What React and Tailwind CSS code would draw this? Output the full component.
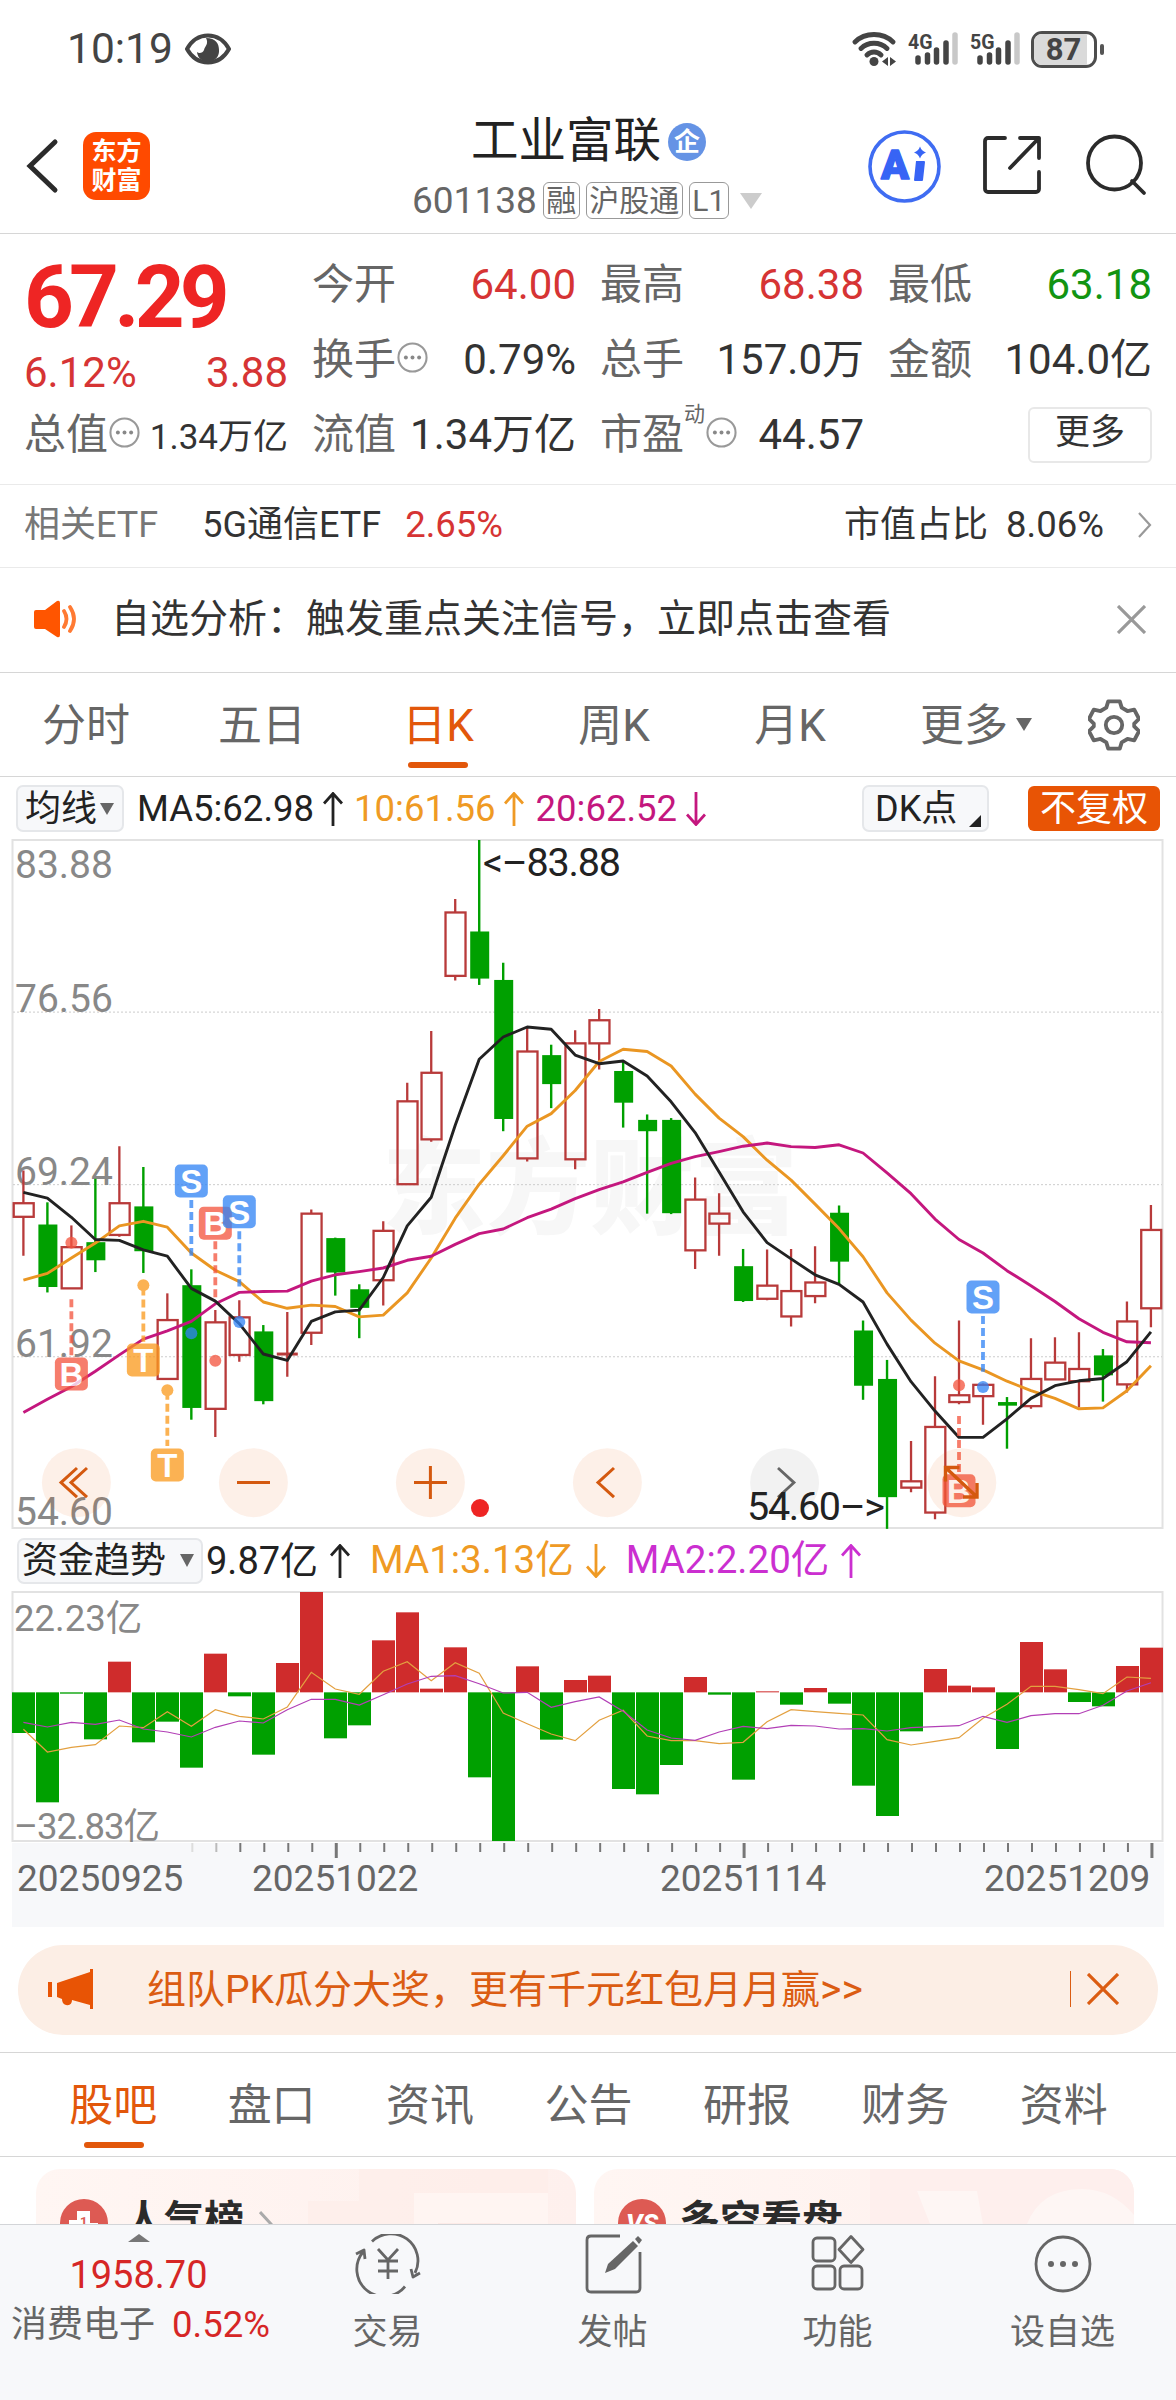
const candles = [
  ["r", 752, 824, 854, 940], ["g", 822, 871, 1009, 1021], ["r", 873, 921, 1012, 1012], ["g", 770, 910, 950, 976],
  ["r", 698, 824, 894, 898], ["g", 744, 831, 930, 978], ["r", 1023, 1082, 1212, 1212], ["g", 970, 1005, 1276, 1302],
  ["r", 1060, 1087, 1278, 1340], ["r", 1038, 1076, 1159, 1174], ["g", 1093, 1107, 1261, 1268], ["r", 1064, 1157, 1157, 1207],
  ["r", 838, 847, 1110, 1137], ["g", 900, 901, 977, 1028], ["g", 1003, 1014, 1055, 1122], ["r", 864, 885, 994, 1050],
  ["r", 558, 599, 782, 782], ["r", 444, 536, 683, 688], ["r", 152, 182, 322, 332], ["g", 22, 224, 328, 342],
  ["g", 293, 331, 638, 665], ["r", 435, 489, 725, 732], ["g", 474, 497, 561, 614], ["r", 442, 471, 727, 749],
  ["r", 395, 420, 471, 529], ["g", 510, 532, 602, 657], ["g", 628, 640, 665, 847], ["g", 636, 640, 846, 848],
  ["r", 767, 816, 928, 969], ["r", 802, 847, 869, 940], ["g", 925, 963, 1040, 1042], ["r", 926, 1006, 1035, 1038],
  ["r", 925, 1018, 1074, 1096], ["r", 919, 999, 1029, 1045], ["g", 829, 845, 953, 1003], ["g", 1083, 1105, 1227, 1258],
  ["g", 1170, 1212, 1473, 1543], ["r", 1349, 1438, 1452, 1462], ["r", 1206, 1318, 1507, 1522], ["r", 1083, 1248, 1263, 1268],
  ["r", 1222, 1225, 1250, 1313], ["g", 1252, 1263, 1271, 1366], ["r", 1122, 1212, 1272, 1278], ["r", 1120, 1176, 1213, 1213],
  ["r", 1109, 1190, 1217, 1275], ["g", 1146, 1160, 1204, 1262], ["r", 1041, 1085, 1224, 1242], ["r", 828, 883, 1056, 1098],
];

const ma5 = [
  800, 813, 855, 904, 906, 927, 941, 1012, 1040, 1090, 1157, 1171, 1085, 1064, 1060, 988, 874, 811, 652, 506, 457, 435, 440, 497,
  516, 510, 543, 600, 668, 755, 843, 911, 947, 982, 1003, 1042, 1135, 1218, 1283, 1341, 1341, 1300, 1255, 1227, 1216, 1211, 1174, 1108,
];
const ma10 = [
  994, 979, 945, 912, 874, 864, 877, 934, 972, 997, 1042, 1056, 1049, 1052, 1075, 1071, 1022, 945, 857, 782, 719, 654, 626, 575,
  511, 484, 489, 521, 583, 636, 677, 729, 773, 826, 880, 942, 1022, 1082, 1133, 1172, 1192, 1217, 1238, 1255, 1278, 1276, 1238, 1183,
];
const ma20 = [
  1286, 1257, 1229, 1195, 1159, 1124, 1106, 1085, 1046, 1021, 1019, 1018, 996, 982, 975, 967, 950, 941, 915, 891, 881, 856, 837, 814,
  794, 777, 756, 736, 721, 710, 698, 691, 699, 701, 695, 713, 757, 803, 859, 904, 934, 973, 1006, 1041, 1079, 1109, 1130, 1132,
];

const flows = [
  609, 817, 491, 628, 395, 637, 575, 713, 371, 499, 674, 399, 186, 625, 586, 331, 247, 476, 352, 742, 933, 409, 629, 450,
  437, 777, 793, 705, 441, 494, 749, 484, 524, 474, 521, 767, 858, 604, 417, 467, 472, 657, 336, 418, 516, 529, 408, 353,
];
const flowMa1 = [
  598, 666, 652, 644, 588, 593, 545, 589, 539, 559, 567, 531, 427, 477, 493, 424, 395, 452, 398, 430, 549, 581, 612, 632,
  571, 541, 618, 632, 632, 641, 637, 575, 539, 545, 550, 555, 629, 645, 634, 623, 565, 523, 469, 469, 479, 491, 441, 445,
];
const flowMa2 = [
  577, 591, 577, 583, 570, 597, 606, 621, 592, 573, 579, 539, 508, 508, 525, 494, 462, 439, 437, 461, 489, 487, 532, 515,
  501, 544, 600, 624, 631, 606, 589, 596, 586, 588, 597, 596, 603, 593, 590, 587, 559, 577, 557, 551, 551, 526, 483, 458,
];

// [letter, column, badge, dash start, dash end, dot]
const markers = [
  ["B", 2, 1201, 1036, 1160, 911],
  ["T", 5, 1170, 1010, 1130, 1005],
  ["T", 6, 1402, 1240, 1360, 1237],
  ["S", 7, 775, 817, 940, 1111],
  ["B", 8, 868, 908, 1035, 1172],
  ["S", 9, 843, 886, 1008, 1086],
  ["B", 39, 1459, 1294, 1418, 1226],
  ["S", 40, 1031, 1073, 1196, 1230],
];
const markerColors = { B: "#f4553f", S: "#3284f5", T: "#fb9a1e" };

const RED = "#b83a3a";
const GREEN = "#00a000";

const colX = (i) => 23.4 + i * 23.99;
const priceY = (v) => (v - 22) * 0.4529;
const flowY = (v) => (v - 186) / 3;
const toPoints = (values, scale) => values.map((v, i) => `${colX(i)},${scale(v).toFixed(1)}`).join(" ");

function Arrow({ down = false }) {
  return (
    <svg width="20" height="34" viewBox="0 0 20 34" fill="none" stroke="currentColor" strokeWidth="2.8" className="shrink-0">
      {down ? <path d="M10 0v32M1 22.500l9 10 9-10" /> : <path d="M10 34V2M1 11.500l9-10 9 10" />}
    </svg>
  );
}

function Dots() {
  return (
    <svg width="31" height="31" viewBox="0 0 30 30" fill="none" className="ml-px mb-[4px] shrink-0">
      <circle cx="15" cy="15" r="13.6" stroke="#999" strokeWidth="2" />
      <circle cx="8.6" cy="15" r="1.9" fill="#888" />
      <circle cx="15" cy="15" r="1.9" fill="#888" />
      <circle cx="21.4" cy="15" r="1.9" fill="#888" />
    </svg>
  );
}

function Signal({ label }) {
  return (
    <svg width="50" height="36" viewBox="0 0 50 36" className="overflow-visible">
      <text x="0" y="17.500" fontSize="21" fontWeight="700" fill="#444" textLength="24.500" lengthAdjust="spacingAndGlyphs">{label}</text>
      <g strokeWidth="5.500" strokeLinecap="round" stroke="#444">
        <path d="M10 27v4M19.500 24v7M28.500 19v12M38 12v19" />
        <path d="M47 4v27" stroke="#c8c8c8" />
      </g>
    </svg>
  );
}

function StatusBar() {
  return (
    <div className="flex h-[98px] items-center pl-[67px] pr-[72px] text-[#444]">
      <span className="text-[42.500px]">10:19</span>
      <svg width="46" height="32" viewBox="0 0 46 32" className="ml-[12px]">
        <path d="M2 16C12-2 34-2 44 16C34 34 12 34 2 16Z" fill="none" stroke="#444" strokeWidth="4" />
        <path d="M21 5C31 5 34 11 34 17a11 11 0 0 1-22 2c2 2 6 1 7-2c1-4 5-6 2-12Z" fill="#444" />
      </svg>
      <div className="ml-auto flex items-center">
        <svg width="46" height="36" viewBox="0 0 46 36" fill="none" stroke="#444" strokeWidth="4.800" strokeLinecap="round" className="mr-[10px]">
          <path d="M3 11C13 1 31 1 41 11M9 17.500c7-7 19-7 26 0M15 24c4-4 10-4 14 0" />
          <circle cx="22" cy="30.500" r="4.500" fill="#444" stroke="none" />
          <path d="M36 26v9l-6-4.500zM38 26v9l6-4.500z" fill="#444" stroke="none" />
        </svg>
        <Signal label="4G" />
        <span className="w-[12px]" />
        <Signal label="5G" />
        <div className="ml-[11px] flex h-[37px] w-[66px] items-center rounded-[11px] border-[3px] border-[#4d4d4d] pr-[7px]">
          <span className="flex h-full w-full items-center justify-center rounded-l-[8px] bg-[#dadada] pl-[6px] text-[31px] font-bold leading-none">87</span>
        </div>
        <span className="ml-[3px] h-[11px] w-[4px] rounded-sm bg-[#555]" />
      </div>
    </div>
  );
}

function Tag({ children }) {
  return (
    <span className="flex h-[37px] shrink-0 items-center whitespace-nowrap rounded-[6px] border-[1.500px] border-[#999] px-[2.500px] text-[30px] leading-none">
      {children}
    </span>
  );
}

function Header() {
  return (
    <header className="grid h-[136px] grid-cols-[412px_350px_1fr] border-b border-[#d6d6d6]">
      <div className="flex items-start pl-[25px] pt-[34px]">
        <svg width="34" height="68" viewBox="0 0 34 68" fill="none" stroke="#2b2b2b" strokeWidth="5" strokeLinecap="round">
          <path d="M30 10L5 34l25 24" />
        </svg>
        <div className="ml-[24px] flex h-[68px] w-[67px] flex-col items-center justify-center rounded-[13px] bg-[#ff4a00] text-[25px] font-bold leading-[29px] text-white">
          <span>东方</span>
          <span>财富</span>
        </div>
      </div>
      <div className="flex flex-col items-center pt-[14px]">
        <div className="flex h-[60px] items-center pl-[3px] text-[47.500px] leading-none text-[#222]">
          工业富联
          <span className="ml-[7px] flex size-[38px] items-center justify-center rounded-full bg-[#6593e5] text-[26px] font-bold text-white">企</span>
        </div>
        <div className="flex h-[57px] w-full items-center gap-[6px] text-[37px] leading-none text-[#666]">
          601138
          <Tag>融</Tag>
          <Tag>沪股通</Tag>
          <Tag>L1</Tag>
          <svg width="22" height="16" viewBox="0 0 22 16" className="ml-[5px] shrink-0"><path d="M0 0h22L11 16z" fill="#ccc" /></svg>
        </div>
      </div>
      <div className="flex items-start pl-[106px] pt-[32px]">
        <svg width="73" height="73" viewBox="0 0 73 73">
          <circle cx="36.500" cy="36.500" r="34.500" fill="none" stroke="#3f6cf2" strokeWidth="3.600" />
          <text x="13" y="49" fontSize="41" fontWeight="900" fill="#3764f5" stroke="#3764f5" strokeWidth="1.500" strokeLinejoin="round" textLength="28" lengthAdjust="spacingAndGlyphs">A</text>
          <path d="M48 31h8q1 0 1 1l-2 18q0 1-1 1h-7q-1 0-1-1z" fill="#3764f5" />
          <path d="M52 16.500q1.500 4.500 6 6q-4.500 1.500-6 6q-1.500-4.500-6-6q4.500-1.500 6-6z" fill="#3764f5" />
        </svg>
        <svg width="60" height="60" viewBox="0 0 60 60" fill="none" stroke="#2b2b2b" strokeWidth="3.800" strokeLinecap="round" strokeLinejoin="round" className="ml-[41px] mt-[5px]">
          <path d="M23 3H6a3 3 0 0 0-3 3v48a3 3 0 0 0 3 3h48a3 3 0 0 0 3-3V37M38 3h19v20M57 3L28 33" />
        </svg>
        <svg width="64" height="64" viewBox="0 0 64 64" fill="none" stroke="#2b2b2b" strokeWidth="3.800" strokeLinecap="round" className="ml-[43px] mt-[4px]">
          <circle cx="29.500" cy="29" r="26.500" />
          <path d="M47 47l12 12" />
        </svg>
      </div>
    </header>
  );
}

function Stat({ label, value, color = "text-[#333]", info }) {
  return (
    <div className="flex items-center justify-between">
      <span className="flex items-center text-[#666]">{label}{info && <Dots />}</span>
      <span className={color}>{value}</span>
    </div>
  );
}

function Quote() {
  return (
    <section className="grid h-[251px] grid-cols-4 grid-rows-[75px_75px_75px] gap-x-6 border-b border-[#eaeaea] px-6 pt-[13px] text-[42px] leading-none">
      <div className="row-span-2 text-[#d63434]">
        <div className="h-[100px] pt-[6px] text-[87px] font-bold leading-[88px] tracking-[-4.800px] text-[#ee2524]">67.29</div>
        <div className="flex justify-between pt-[5px]">
          <span>6.12%</span>
          <span>3.88</span>
        </div>
      </div>
      <Stat label="今开" value="64.00" color="text-[#d63434]" />
      <Stat label="最高" value="68.38" color="text-[#d63434]" />
      <Stat label="最低" value="63.18" color="text-[#129412]" />
      <Stat label="换手" value="0.79%" info />
      <Stat label="总手" value="157.0万" />
      <Stat label="金额" value="104.0亿" />
      <Stat label="总值" value={<span className="text-[35px]">1.34万亿</span>} info />
      <Stat label="流值" value="1.34万亿" />
      <Stat label={<>市盈<sup className="top-0 -mt-[42px] text-[21px]">动</sup></>} value="44.57" info />
      <div className="flex items-center justify-end">
        <button className="h-[56px] w-[124px] rounded-[6px] border-2 border-[#e8e8e8] pb-[4px] text-[35px] leading-none text-[#333]">更多</button>
      </div>
    </section>
  );
}

function EtfRow() {
  return (
    <div className="flex h-[83px] items-center border-b border-[#eaeaea] px-6 pb-[2px] text-[36px] text-[#333]">
      <span className="text-[#777]">相关ETF</span>
      <span className="ml-[44px]">5G通信ETF</span>
      <span className="ml-[24px] text-[36.500px] text-[#d63434]">2.65%</span>
      <span className="ml-auto">市值占比</span>
      <span className="ml-[18px] text-[36.500px]">8.06%</span>
      <svg width="14" height="26" viewBox="0 0 14 26" fill="none" stroke="#999" strokeWidth="2.200" className="ml-[34px]">
        <path d="M1 1l11 12L1 25" />
      </svg>
    </div>
  );
}

function Notice() {
  return (
    <div className="flex h-[105px] items-center border-b border-[#d6d6d6] pb-[2px] pl-[33px] pr-[30px] text-[39px] text-[#333]">
      <svg width="46" height="38" viewBox="0 0 46 38" fill="none">
        <path d="M1 12q0-2 2-2h9L24 1q3-1 3 2v32q0 3-3 2l-12-8H3q-2 0-2-2z" fill="#ff5500" />
        <path d="M31 11q5 8 0 16M37 7q8 12 0 24" stroke="#ff7a33" strokeWidth="3.800" strokeLinecap="round" />
      </svg>
      <span className="ml-[32px]">自选分析：触发重点关注信号，立即点击查看</span>
      <svg width="29" height="29" viewBox="0 0 29 29" stroke="#999" strokeWidth="3.200" className="ml-auto"><path d="M1 1l27 27M28 1L1 28" /></svg>
    </div>
  );
}

function PeriodTabs() {
  return (
    <nav className="flex h-[104px] items-center border-b border-[#d6d6d6] text-[44px] leading-none text-[#666]">
      {["分时", "五日", "日K", "周K", "月K"].map((tab) => (
        <div key={tab} className={`relative flex h-full w-44 items-center justify-center pr-[4px] pt-[2px] ${tab === "日K" ? "text-[#e2570b]" : ""}`}>
          {tab}
          {tab === "日K" && <span className="absolute bottom-[8px] left-[56px] h-[6px] w-[60px] rounded-full bg-[#e2570b]" />}
        </div>
      ))}
      <span className="ml-[40px] pt-[2px]">更多</span>
      <svg width="16" height="13" viewBox="0 0 15 12" className="ml-[8px]"><path d="M0 0h15L7.500 12z" fill="#666" /></svg>
      <svg width="52" height="52" viewBox="0 0 54 54" fill="none" stroke="#666" strokeWidth="4" strokeLinejoin="round" className="ml-[56px]">
        <path d="M21 2.500h12l2 6.500 6 3.500 7-1.500 5 9.500-5 5v3l5 5-5 9.500-7-1.500-6 3.500-2 6.500H21l-2-6.500-6-3.500-7 1.500L1 33.500l5-5v-3l-5-5L6 11l7 1.500L19 9z" />
        <circle cx="27" cy="27" r="8.500" />
      </svg>
    </nav>
  );
}

function AverageBar() {
  return (
    <div className="flex h-[63px] items-center pl-[16px] pr-[16px] text-[36px] leading-none text-[#222]">
      <div className="flex h-[47px] w-[108px] items-center rounded-[7px] border-2 border-[#e5e7ea] bg-[#f7f8fa] pl-[7px]">
        均线
        <svg width="14" height="12" viewBox="0 0 13 11" className="ml-[3px]"><path d="M0 0h13L6.500 11z" fill="#666" /></svg>
      </div>
      <span className="ml-[13px] mr-[9px] pt-px text-[36.500px]">MA5:62.98</span>
      <Arrow />
      <span className="ml-[11px] mr-[8px] pt-px text-[36.500px] text-[#ef9a24]">10:61.56</span>
      <span className="text-[#ef9a24]"><Arrow /></span>
      <span className="ml-[12px] mr-[9px] pt-px text-[36.500px] text-[#c4177e]">20:62.52</span>
      <span className="text-[#c4177e]"><Arrow down /></span>
      <div className="ml-auto flex h-[47px] w-[127px] items-center rounded-[7px] border-2 border-[#e5e7ea] bg-[#f7f8fa] pl-[11px]">
        DK点
        <svg width="12" height="12" viewBox="0 0 11 11" className="ml-[12px] mt-[24px]"><path d="M11 0v11H0z" fill="#222" /></svg>
      </div>
      <div className="ml-[39px] flex h-[45px] w-[132px] items-center justify-center rounded-[6px] bg-[#e85405] text-white">不复权</div>
    </div>
  );
}

function Marker({ data }) {
  const [letter, col, badge, from, to, dot] = data;
  const x = colX(col);
  const color = markerColors[letter];
  return (
    <g opacity="0.76">
      <path d={`M${x} ${priceY(from)}V${priceY(to)}`} stroke={color} strokeWidth="3.800" strokeDasharray="8 4" />
      <circle cx={x} cy={priceY(dot)} r="6" fill={color} />
      <rect x={x - 16.500} y={priceY(badge) - 16.500} width="33" height="33" rx="5" fill={color} />
      <text x={x} y={priceY(badge) + 12} textAnchor="middle" fontSize="33" fontWeight="700" fontFamily="Liberation Sans" fill="#fff">
        {letter}
      </text>
    </g>
  );
}

function CandleChart() {
  const controlY = priceY(1441);
  return (
    <svg width="1176" height="690" viewBox="0 0 1176 690" className="block overflow-visible" fill="none">
      <text x="382" y="386" fontSize="104" fontWeight="900" fill="#f7f7f7">东方财富</text>
      <rect x="12.500" y="0" width="1150" height="688" stroke="#e2e2e2" strokeWidth="2" />
      {[402, 783, 1163].map((v) => (
        <path key={v} d={`M13 ${priceY(v)}H1162`} stroke="#ccc" strokeDasharray="2 2" />
      ))}
      <g fontSize="39" fill="#888">
        <text x="15" y="38">83.88</text>
        <text x="15" y="172">76.56</text>
        <text x="15" y="345">69.24</text>
        <text x="15" y="517">61.92</text>
        <text x="15" y="685">54.60</text>
      </g>
      {candles.map(([kind, high, top, bottom, low], i) => {
        const x = colX(i);
        const bodyH = priceY(bottom) - priceY(top);
        return kind === "g" ? (
          <g key={i} fill={GREEN}>
            <rect x={x - 1.2} y={priceY(high)} width="2.4" height={priceY(low) - priceY(high)} />
            <rect x={x - 9} y={priceY(top)} width="19" height={bodyH} />
          </g>
        ) : (
          <g key={i} stroke={RED} strokeWidth="2.300">
            <path d={`M${x} ${priceY(high)}V${priceY(top)}M${x} ${priceY(bottom)}V${priceY(low)}`} />
            {bodyH > 0 ? (
              <rect x={x - 9.700} y={priceY(top)} width="20" height={bodyH} />
            ) : (
              <path d={`M${x - 10.500} ${priceY(top)}h21`} strokeWidth="3" />
            )}
          </g>
        );
      })}
      <g strokeWidth="2.900" strokeLinejoin="round">
        <polyline points={toPoints(ma10, priceY)} stroke="#ea9622" />
        <polyline points={toPoints(ma20, priceY)} stroke="#c4177e" />
        <polyline points={toPoints(ma5, priceY)} stroke="#222" />
      </g>
      {markers.map((m) => (
        <Marker key={`${m[0]}${m[1]}`} data={m} />
      ))}
      <g fill="#e85405" fillOpacity="0.09">
        {[76.400, 253.400, 430.400, 607.400, 961.800].map((cx) => (
          <circle key={cx} cx={cx} cy={controlY} r="34.500" />
        ))}
      </g>
      <circle cx="784.600" cy={controlY} r="34.500" fill="#000" fillOpacity="0.05" />
      <g stroke="#d4590f" strokeWidth="3">
        <path d="M77 628L61 642.600l16 14.600M87 628L71 642.600l16 14.600" />
        <path d="M237 642.600h33M414 642.600h33M430.400 626v33" />
        <path d="M614 628L598 642.600l16 14.600" />
        <path d="M959.500 627.500h-14v14M945.500 627.500l31.500 29.500M963 657h14v-14" strokeWidth="3.400" />
      </g>
      <path d="M778 628l16 14.600-16 14.600" stroke="#666" strokeWidth="2.800" />
      <circle cx="480" cy={priceY(1497)} r="9" fill="#ee2524" />
      <g fontSize="39.500" fill="#222">
        <text x="483" y="36" textLength="138">&lt;–83.88</text>
        <text x="747" y="680" textLength="138">54.60–&gt;</text>
      </g>
    </svg>
  );
}

function FlowBar() {
  return (
    <div className="flex h-[62px] items-center pb-[1px] pl-[17px] text-[38px] leading-none text-[#222]">
      <div className="flex h-[46px] w-[186px] items-center rounded-[7px] border-2 border-[#e5e7ea] bg-[#f7f8fa] pl-[3px] text-[36px]">
        资金趋势
        <svg width="14" height="13" viewBox="0 0 14 13" className="ml-[14px]"><path d="M0 0h14L7 13z" fill="#666" /></svg>
      </div>
      <span className="ml-[3px] mr-[12px]">9.87亿</span>
      <Arrow />
      <div className="ml-[20px] flex items-center text-[#ef9a24]"><span className="mr-[12px] text-[38.500px]">MA1:3.13亿</span><Arrow down /></div>
      <div className="ml-[20px] flex items-center text-[#cb2fd0]"><span className="mr-[12px] text-[38.500px]">MA2:2.20亿</span><Arrow /></div>
    </div>
  );
}

function FlowChart() {
  const zero = flowY(487);
  return (
    <svg width="1176" height="335" viewBox="0 0 1176 335" className="block overflow-visible" fill="none">
      <rect x="12" y="251" width="1152" height="84" fill="#f7f8fa" />
      <rect x="12.500" y="0" width="1150" height="249" stroke="#e2e2e2" strokeWidth="2" />
      {flows.map((v, i) => {
        const top = Math.min(flowY(v), zero);
        return (
          <rect key={i} x={12 + i * 24} y={top} width="23" height={Math.abs(flowY(v) - zero)} fill={v < 487 ? "#cf2c2c" : GREEN} />
        );
      })}
      <polyline points={toPoints(flowMa1, flowY)} stroke="#e3a040" strokeWidth="1.200" />
      <polyline points={toPoints(flowMa2, flowY)} stroke="#b23fb6" strokeWidth="1.200" />
      <g fontSize="36.500" fill="#888">
        <text x="14" y="39">22.23亿</text>
        <text x="14" y="247" textLength="146">–32.83亿</text>
      </g>
      {Array.from({ length: 41 }, (_, n) => n + 7).map((i) => {
        const major = i === 13 || i === 30 || i === 47;
        return (
          <path
            key={i}
            d={`M${24.400 + i * 23.990} 251v${major ? 15 : 9}`}
            stroke={i === 7 ? "#ddd" : i === 8 ? "#bbb" : "#777"}
            strokeWidth={major ? 3 : 2}
          />
        );
      })}
      <g fontSize="37" fill="#666">
        <text x="17" y="299">20250925</text>
        <text x="252" y="299">20251022</text>
        <text x="660" y="299">20251114</text>
        <text x="984" y="299">20251209</text>
      </g>
    </svg>
  );
}

function Promo() {
  return (
    <div className="mx-[18px] mt-[18px] flex h-[90px] items-center rounded-full bg-[#fceee5] pb-[2px] pl-[30px] pr-[39px] text-[39px] leading-none text-[#db5c12]">
      <svg width="46" height="40" viewBox="0 0 46 40" fill="#e85405">
        <path d="M0 13h4v15H0zM9 14L42 3V0h3v40h-3v-4l-18-5q0 6-6 5-4-1-4-6l-5-2z" />
      </svg>
      <span className="ml-[53px]">组队PK瓜分大奖，更有千元红包月月赢<span className="text-[41px]">&gt;&gt;</span></span>
      <span className="ml-auto h-[36px] w-px bg-[#db5c12]" />
      <svg width="32" height="32" viewBox="0 0 32 32" stroke="#db5c12" strokeWidth="3.200" className="ml-[16px]"><path d="M1 1l30 30M31 1L1 31" /></svg>
    </div>
  );
}

function SectionTabs() {
  return (
    <nav className="mt-[17px] flex h-[105px] items-center border-y border-[#d6d6d6] pl-[34px] pr-[33px] text-[44px] leading-none text-[#666]">
      {["股吧", "盘口", "资讯", "公告", "研报", "财务", "资料"].map((tab, i) => (
        <div key={tab} className={`relative flex h-full flex-1 items-center justify-center pt-[2px] ${i === 0 ? "text-[#e2570b]" : ""}`}>
          {tab}
          {i === 0 && <span className="absolute bottom-[8px] left-[50px] h-[6px] w-[60px] rounded-full bg-[#e2570b]" />}
        </div>
      ))}
    </nav>
  );
}

function Cards() {
  return (
    <div className="flex h-[67px] gap-[18px] overflow-hidden pl-9 pt-[12px] text-[40px] font-bold leading-none text-[#2b2b2b]">
      <div className="flex h-[120px] w-[540px] shrink-0 items-start overflow-hidden rounded-[24px] bg-gradient-to-r from-[#fff6f3] to-[#fef0ed] pl-[24px] pt-[30px]">
        <svg width="48" height="48" viewBox="0 0 48 48" className="shrink-0">
          <circle cx="24" cy="24" r="24" fill="#dd5a53" />
          <path d="M9 21h8v-9h13v12h8v14H9z" fill="#fff" />
          <text x="20" y="27" fontSize="13" fontWeight="700" fill="#dd5a53">1</text>
        </svg>
        <span className="ml-[16px] mt-[2px] shrink-0">人气榜</span>
        <svg width="14" height="26" viewBox="0 0 14 26" fill="none" stroke="#aaa" strokeWidth="3" className="ml-[15px] mt-[12px] shrink-0"><path d="M1 1l11 12L1 25" /></svg>
        <svg width="240" height="90" viewBox="0 0 240 90" className="ml-[35px] -mt-[30px] shrink-0">
          <path d="M0 32h51V0h189v90H0z" fill="#fdece8" opacity=".6" />
          <path d="M106 24h134v66H106z" fill="#fff5f2" />
          <path d="M130 54h62v36h-62z" fill="#fdebe7" />
        </svg>
      </div>
      <div className="flex h-[120px] w-[540px] shrink-0 items-start overflow-hidden rounded-[24px] bg-gradient-to-r from-[#fff6f3] to-[#fef0ed] pl-[24px] pt-[30px]">
        <svg width="48" height="48" viewBox="0 0 48 48" className="shrink-0">
          <circle cx="24" cy="24" r="24" fill="#dd5a53" />
          <text x="24" y="33" textAnchor="middle" fontSize="26" fontStyle="italic" fontWeight="800" fill="#fff">VS</text>
        </svg>
        <span className="ml-[13px] mt-[2px] shrink-0 text-[41px]">多空看盘</span>
        <svg width="266" height="90" viewBox="0 0 266 90" className="ml-[27px] -mt-[30px] shrink-0">
          <path d="M0 0h266v90H0z" fill="#feefed" />
          <path d="M47 22h60l12 68H74zM150 90q4-70 62-70 30 0 52 26v44h-44q-12-20-30-6z" fill="#fef6f4" />
        </svg>
      </div>
    </div>
  );
}

function NavItem({ label, children }) {
  return (
    <div className="flex w-[225px] flex-col items-center pt-[9px]">
      <svg width="66" height="60" viewBox="0 0 66 60" fill="none" stroke="#666" strokeWidth="2.800">{children}</svg>
      <span className="mt-[21px] text-[35px] leading-none">{label}</span>
    </div>
  );
}

function BottomBar() {
  return (
    <footer className="flex h-[176px] border-t border-[#d3d5d8] bg-[#f7f8fa] text-[#666]">
      <div className="flex w-[275px] flex-col items-center pl-[2px]">
        <svg width="22" height="8" viewBox="0 0 22 8" className="mt-[9px]"><path d="M0 8h22L11 0z" fill="#777" /></svg>
        <span className="mt-[14px] text-[38px] leading-none text-[#d62626]">1958.70</span>
        <div className="mt-[13px] flex items-center gap-[17px] pl-[4px] text-[36px] leading-none">
          消费电子<span className="text-[36.500px] text-[#d62626]">0.52%</span>
        </div>
      </div>
      <NavItem label="交易">
        <path d="M17 7.500A27 27 0 0 1 60 39M50 52.500A27 27 0 0 1 8 18M1 20l8-4 1 9M65 39l-7 4-2-8" strokeLinejoin="round" />
        <path d="M23 15l10 11 10-11M23 27h20M23 37h20M33 26v19" />
      </NavItem>
      <NavItem label="发帖">
        <path d="M40 2H11q-4 0-4 4v48q0 4 4 4h45q4 0 4-4V18" />
        <path d="M25 39l3-9L53 7l5 5-23 23z" fill="#666" stroke="none" />
        <path d="M55 5l3-3 4 4-3 4z" fill="#666" stroke="none" />
      </NavItem>
      <NavItem label="功能">
        <rect x="8" y="4" width="22" height="23" rx="4" />
        <path d="M46 2.500l12 13-12 13-12-13z" strokeLinejoin="round" />
        <rect x="8" y="32" width="22" height="23" rx="4" />
        <rect x="35" y="32" width="22" height="23" rx="4" />
      </NavItem>
      <NavItem label="设自选">
        <circle cx="33" cy="30" r="27" />
        <g fill="#666" stroke="none"><circle cx="21" cy="30" r="3" /><circle cx="33" cy="30" r="3" /><circle cx="45" cy="30" r="3" /></g>
      </NavItem>
    </footer>
  );
}

export default function App() {
  return (
    <div className="h-[2400px] w-[1176px] overflow-hidden bg-white font-[Roboto,'Noto_Sans_CJK_SC',sans-serif]">
      <StatusBar />
      <Header />
      <Quote />
      <EtfRow />
      <Notice />
      <PeriodTabs />
      <AverageBar />
      <CandleChart />
      <FlowBar />
      <FlowChart />
      <Promo />
      <SectionTabs />
      <Cards />
      <BottomBar />
    </div>
  );
}
